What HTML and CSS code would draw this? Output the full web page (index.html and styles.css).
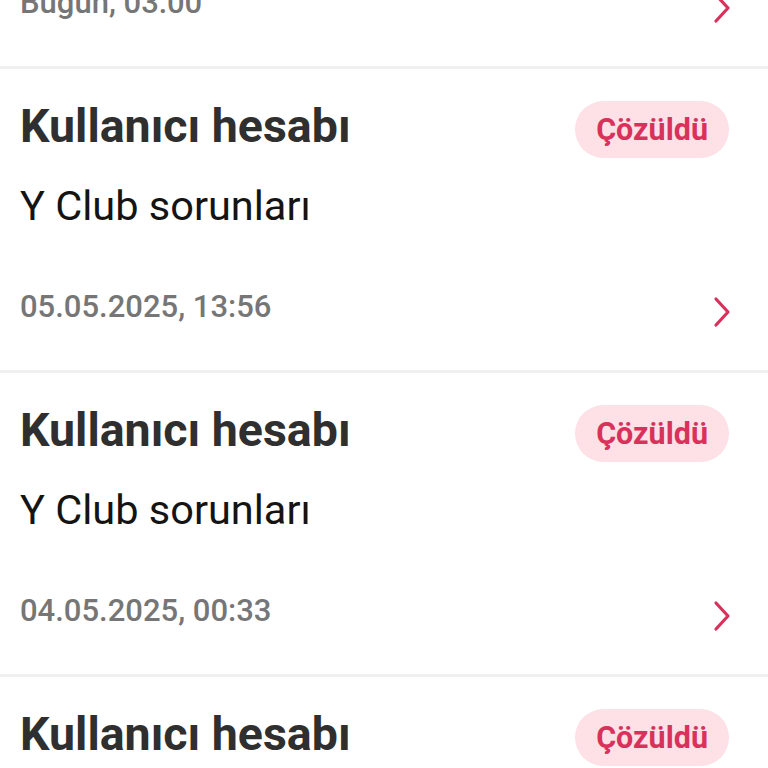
FILE: index.html
```html
<!DOCTYPE html>
<html lang="tr">
<head>
  <meta charset="UTF-8">
  <title>Destek talepleri</title>
  <meta name="viewport" content="width=device-width, initial-scale=1.0">
  <link rel="stylesheet" href="styles.css">
</head>
<body>
  <div class="talep-lista">
    <div class="talep">
      <div class="talep-ust">
        <h2>Kullanıcı hesabı</h2>
        <span class="durum">Çözüldü</span>
      </div>
      <p class="konu">Y Club sorunları</p>
      <div class="talep-alt">
        <span class="tarih">Bugün, 03:00</span>
        <svg class="ok" viewBox="0 0 18 32" width="18" height="32"><path d="M3 3 L15 16 L3 29"/></svg>
      </div>
    </div>
    <div class="talep">
      <div class="talep-ust">
        <h2>Kullanıcı hesabı</h2>
        <span class="durum">Çözüldü</span>
      </div>
      <p class="konu">Y Club sorunları</p>
      <div class="talep-alt">
        <span class="tarih">05.05.2025, 13:56</span>
        <svg class="ok" viewBox="0 0 18 32" width="18" height="32"><path d="M3 3 L15 16 L3 29"/></svg>
      </div>
    </div>
    <div class="talep">
      <div class="talep-ust">
        <h2>Kullanıcı hesabı</h2>
        <span class="durum">Çözüldü</span>
      </div>
      <p class="konu">Y Club sorunları</p>
      <div class="talep-alt">
        <span class="tarih">04.05.2025, 00:33</span>
        <svg class="ok" viewBox="0 0 18 32" width="18" height="32"><path d="M3 3 L15 16 L3 29"/></svg>
      </div>
    </div>
    <div class="talep">
      <div class="talep-ust">
        <h2>Kullanıcı hesabı</h2>
        <span class="durum">Çözüldü</span>
      </div>
      <p class="konu">Y Club sorunları</p>
      <div class="talep-alt">
        <span class="tarih">03.05.2025, 18:12</span>
        <svg class="ok" viewBox="0 0 18 32" width="18" height="32"><path d="M3 3 L15 16 L3 29"/></svg>
      </div>
    </div>
  </div>
</body>
</html>
```

FILE: styles.css
```css
:root {
  --text: #2f2f2f;
  --text-strong: #141414;
  --muted: #767676;
  --accent: #d8325c;
  --badge-bg: #fde1e7;
  --line: #f0f0f0;
}
body {
  margin: 0;
  background: #fff;
  font-family: Roboto, 'Noto Sans', sans-serif;
  color: var(--text);
  overflow: hidden;
}
/* liste kaydırılmış halde: ilk kart yarıda */
.talep-lista {
  margin-top: -235px;
}
.talep {
  padding: 30px 39px 42px 20px;
  border-bottom: 3px solid var(--line);
}
.talep-ust {
  display: flex;
  justify-content: space-between;
  align-items: flex-start;
  height: 59px;
}
.talep-ust h2 {
  margin: 0;
  font-size: 46.5px;
  line-height: 54px;
  font-weight: 700;
  color: var(--text);
}
.durum {
  margin-top: 2px;
  height: 57px;
  line-height: 57px;
  padding: 0 21px;
  border-radius: 29px;
  background: var(--badge-bg);
  color: var(--accent);
  font-size: 30.5px;
  font-weight: 700;
}
.konu {
  margin: 24px 0 0;
  font-size: 41.5px;
  line-height: 48px;
  color: var(--text-strong);
}
.talep-alt {
  display: flex;
  justify-content: space-between;
  align-items: flex-start;
  margin-top: 59px;
  height: 39px;
}
.tarih {
  font-size: 31px;
  line-height: 36px;
  font-weight: 500;
  color: var(--muted);
}
.ok {
  margin-top: 7px;
  margin-right: -2px;
}
.ok path {
  fill: none;
  stroke: var(--accent);
  stroke-width: 3.2;
  stroke-linecap: round;
  stroke-linejoin: round;
}
```
